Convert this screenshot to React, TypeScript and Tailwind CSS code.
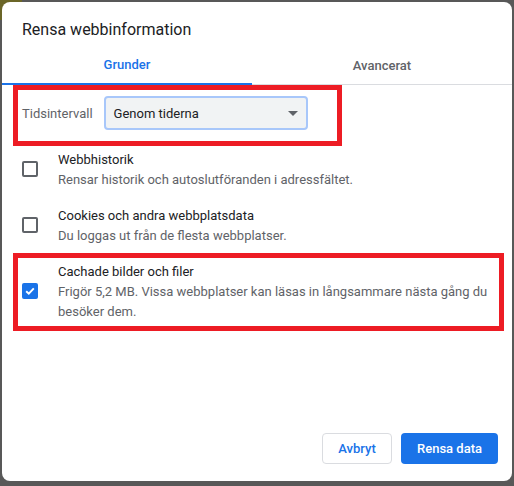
import React from "react";

function Checkbox({ checked }: { checked?: boolean }) {
  if (checked) {
    return (
      <div className="w-[16px] h-[16px] rounded-[2px] bg-[#1a73e8] flex items-center justify-center shrink-0">
        <svg width="12" height="12" viewBox="0 0 12 12">
          <polyline points="2.2,6.2 4.8,8.7 9.8,3.4" fill="none" stroke="#ffffff" strokeWidth="1.9" />
        </svg>
      </div>
    );
  }
  return <div className="w-[16px] h-[16px] rounded-[2px] border-2 border-[#5f6368] shrink-0" />;
}

function Row({ title, sub, checked }: { title: string; sub: React.ReactNode; checked?: boolean }) {
  return (
    <div className="flex items-center py-[7px] gap-[20px]">
      <Checkbox checked={checked} />
      <div className="flex-1">
        <div className="text-[13px] leading-[21px] pt-[1px] text-[#202124]">{title}</div>
        <div className="text-[13px] leading-[20px] text-[#5f6368]">{sub}</div>
      </div>
    </div>
  );
}

export default function App() {
  return (
    <div className="relative w-[514px] h-[486px] bg-[#585858] p-[2px] overflow-hidden font-['Roboto','Liberation_Sans',sans-serif]">
      <div className="absolute top-0 left-0 w-[22px] h-[20px] bg-[#6b6628]" />
      <div className="relative w-[510px] h-[479px] bg-white rounded-[8px] flex flex-col">
        <div className="pt-[16px] pl-[20px] text-[16px] leading-[24px] text-[#202124]">Rensa webbinformation</div>
        <div className="mt-[3px] flex h-[40px]">
          <div className="w-[250px] flex items-center justify-center pt-[2px] border-b-2 border-[#1a73e8] text-[13px] font-medium text-[#1a73e8]">
            Grunder
          </div>
          <div className="flex-1 flex items-center justify-center pt-[2px] border-b border-[#dadce0] text-[13px] font-medium text-[#5f6368]">
            Avancerat
          </div>
        </div>
        <div className="px-[20px]">
          <div className="mt-[11px] flex items-center gap-[11px]">
            <span className="text-[13px] pt-[2px] text-[#5f6368]">Tidsintervall</span>
            <div className="w-[204px] h-[34px] rounded-[4px] border-2 border-[#a8c7fa] bg-[#f1f3f4] flex items-center justify-between pl-[8px] pr-[8px] text-[13px] text-[#202124]">
              <span className="pt-[2px]">Genom tiderna</span>
              <svg width="10" height="5" viewBox="0 0 10 5">
                <polygon points="0,0 10,0 5,5" fill="#5f6368" />
              </svg>
            </div>
          </div>
          <div className="mt-[11px]">
            <Row title="Webbhistorik" sub="Rensar historik och autoslutföranden i adressfältet." />
            <Row title="Cookies och andra webbplatsdata" sub="Du loggas ut från de flesta webbplatser." />
            <Row
              checked
              title="Cachade bilder och filer"
              sub="Frigör 5,2 MB. Vissa webbplatser kan läsas in långsammare nästa gång du besöker dem."
            />
          </div>
        </div>
        <div className="mt-auto flex justify-end gap-[9px] pr-[14px] pb-[17px]">
          <button className="h-[31px] w-[70px] rounded-[4px] border border-[#dadce0] bg-white text-[13px] font-medium text-[#1a73e8]">
            Avbryt
          </button>
          <button className="h-[31px] w-[97px] rounded-[4px] bg-[#1a73e8] text-[13px] font-medium text-white">
            Rensa data
          </button>
        </div>
        <div className="absolute left-[11px] top-[83px] w-[329px] h-[61px] border-[5px] border-[#ed1c24] pointer-events-none" />
        <div className="absolute left-[11px] top-[251px] w-[491px] h-[78px] border-[5px] border-[#ed1c24] pointer-events-none" />
      </div>
    </div>
  );
}
